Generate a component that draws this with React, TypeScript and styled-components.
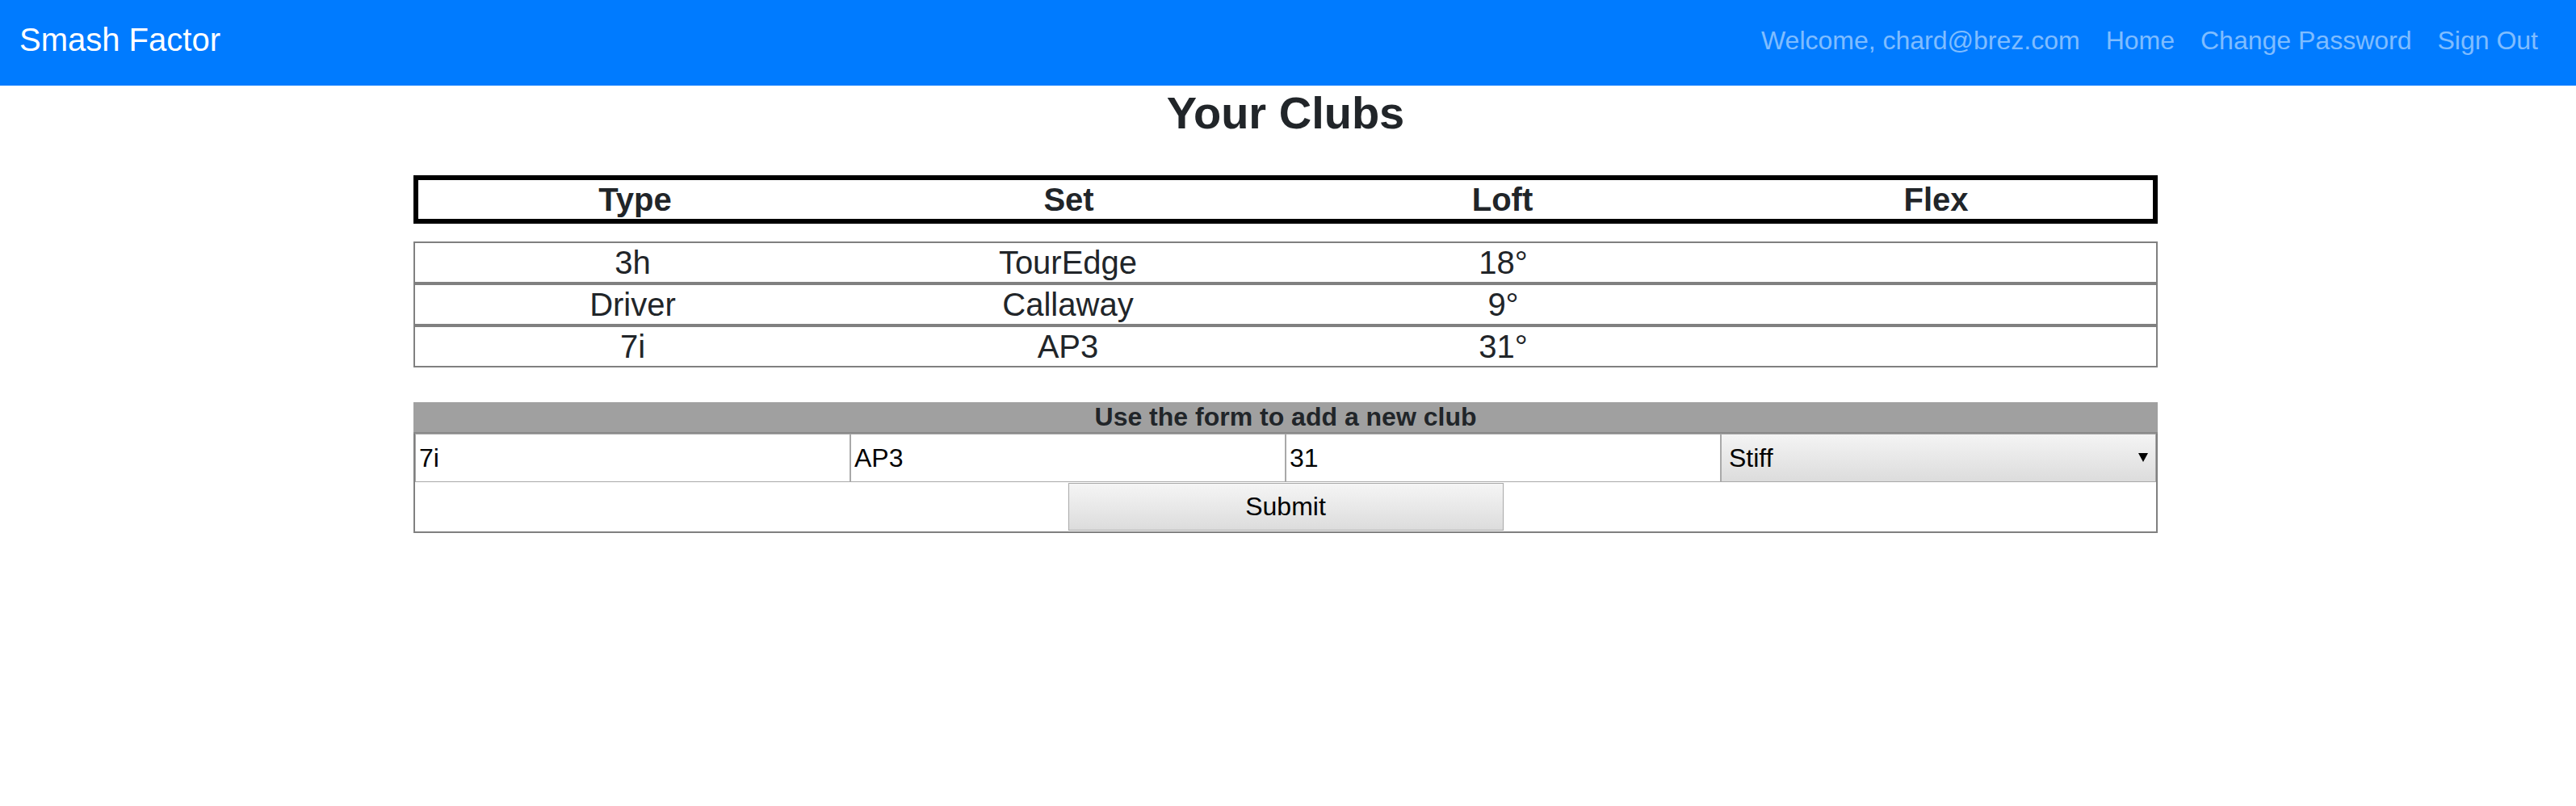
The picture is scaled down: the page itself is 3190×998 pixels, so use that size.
import React from "react";
import styled, { createGlobalStyle } from "styled-components";

const GlobalStyle = createGlobalStyle`
  * { box-sizing: border-box; }
  html, body {
    margin: 0;
    padding: 0;
    background: #ffffff;
  }
  body {
    font-family: "Liberation Sans", Arial, Helvetica, sans-serif;
    color: #212529;
  }
`;

const NavBar = styled.nav`
  display: flex;
  align-items: center;
  justify-content: space-between;
  height: 106px;
  padding: 0 31px 8px 24px;
  background: #007bff;
`;

const Brand = styled.a`
  font-size: 40px;
  line-height: 46px;
  color: #ffffff;
  text-decoration: none;
`;

const NavList = styled.ul`
  display: flex;
  align-items: center;
  list-style: none;
  margin: 0;
  padding: 2px 0 0;
`;

const NavItem = styled.li`
  padding: 0 16px;
  font-size: 32px;
  line-height: 37px;
  color: rgba(255, 255, 255, 0.5);
`;

const NavLink = styled.a`
  color: rgba(255, 255, 255, 0.5);
  text-decoration: none;
`;

const Main = styled.main`
  width: 2160px;
  margin-left: 512px;
`;

const Title = styled.h1`
  margin: 0 0 44px;
  text-align: center;
  font-size: 56px;
  font-weight: 700;
  line-height: 1.2;
  color: #212529;
`;

const HeaderRow = styled.div`
  display: grid;
  grid-template-columns: repeat(4, 1fr);
  border: 6px solid #000000;
  margin-bottom: 22px;
`;

const HeaderCell = styled.div`
  text-align: center;
  font-size: 40px;
  font-weight: 700;
  line-height: 48px;
  color: #212529;
`;

const ClubList = styled.div`
  display: flex;
  flex-direction: column;
  margin-bottom: 43px;
`;

const ClubRow = styled.div`
  display: grid;
  grid-template-columns: repeat(4, 1fr);
  border: 2px solid #808080;
`;

const ClubCell = styled.div`
  text-align: center;
  font-size: 40px;
  line-height: 48px;
  color: #212529;
  min-height: 48px;
`;

const AddForm = styled.form`
  display: flex;
  flex-direction: column;
`;

const FormTitle = styled.div`
  background: #a0a0a0;
  border-bottom: 2px solid #8a8a8a;
  text-align: center;
  font-size: 32px;
  font-weight: 700;
  line-height: 37px;
  color: #212529;
`;

const FormBody = styled.div`
  border: 2px solid #808080;
  border-top: none;
`;

const InputRow = styled.div`
  display: grid;
  grid-template-columns: repeat(4, 1fr);
`;

const TextInput = styled.input`
  width: 100%;
  height: 60px;
  margin: 0;
  padding: 0 4px;
  border: 1px solid #a9a9a9;
  border-radius: 0;
  background: #ffffff;
  font-family: "Liberation Sans", Arial, Helvetica, sans-serif;
  font-size: 32px;
  color: #000000;
  outline: none;
`;

const SelectWrap = styled.div`
  position: relative;
  height: 60px;
`;

const Select = styled.select`
  appearance: none;
  -webkit-appearance: none;
  width: 100%;
  height: 60px;
  margin: 0;
  padding: 0 30px 0 9px;
  border: 1px solid #a9a9a9;
  border-radius: 0;
  background: linear-gradient(#f4f4f4, #dcdcdc);
  font-family: "Liberation Sans", Arial, Helvetica, sans-serif;
  font-size: 32px;
  color: #000000;
  outline: none;
`;

const Arrow = styled.svg`
  position: absolute;
  right: 10px;
  top: 50%;
  width: 12px;
  height: 12px;
  margin-top: -7px;
  pointer-events: none;
`;

const SubmitRow = styled.div`
  display: flex;
  justify-content: center;
  padding: 1px 0;
`;

const SubmitButton = styled.button`
  width: 539px;
  height: 59px;
  margin: 0;
  padding: 0;
  border: 1px solid #a9a9a9;
  border-radius: 0;
  background: linear-gradient(#f5f5f5, #dcdcdc);
  font-family: "Liberation Sans", Arial, Helvetica, sans-serif;
  font-size: 32px;
  color: #000000;
  cursor: pointer;
`;

const clubs = [
  { type: "3h", set: "TourEdge", loft: "18°", flex: "" },
  { type: "Driver", set: "Callaway", loft: "9°", flex: "" },
  { type: "7i", set: "AP3", loft: "31°", flex: "" },
];

export default function App() {
  return (
    <>
      <GlobalStyle />
      <NavBar>
        <Brand href="#">Smash Factor</Brand>
        <NavList>
          <NavItem>Welcome, chard@brez.com</NavItem>
          <NavItem>
            <NavLink href="#">Home</NavLink>
          </NavItem>
          <NavItem>
            <NavLink href="#">Change Password</NavLink>
          </NavItem>
          <NavItem>
            <NavLink href="#">Sign Out</NavLink>
          </NavItem>
        </NavList>
      </NavBar>
      <Main>
        <Title>Your Clubs</Title>
        <HeaderRow>
          <HeaderCell>Type</HeaderCell>
          <HeaderCell>Set</HeaderCell>
          <HeaderCell>Loft</HeaderCell>
          <HeaderCell>Flex</HeaderCell>
        </HeaderRow>
        <ClubList>
          {clubs.map((c, i) => (
            <ClubRow key={i}>
              <ClubCell>{c.type}</ClubCell>
              <ClubCell>{c.set}</ClubCell>
              <ClubCell>{c.loft}</ClubCell>
              <ClubCell>{c.flex}</ClubCell>
            </ClubRow>
          ))}
        </ClubList>
        <AddForm onSubmit={(e) => e.preventDefault()}>
          <FormTitle>Use the form to add a new club</FormTitle>
          <FormBody>
            <InputRow>
              <TextInput defaultValue="7i" />
              <TextInput defaultValue="AP3" />
              <TextInput defaultValue="31" />
              <SelectWrap>
                <Select defaultValue="Stiff">
                  <option>Ladies</option>
                  <option>Senior</option>
                  <option>Regular</option>
                  <option>Stiff</option>
                  <option>Extra Stiff</option>
                </Select>
                <Arrow viewBox="0 0 12 12">
                  <polygon points="0,1 12,1 6,12" fill="#000" />
                </Arrow>
              </SelectWrap>
            </InputRow>
            <SubmitRow>
              <SubmitButton type="submit">Submit</SubmitButton>
            </SubmitRow>
          </FormBody>
        </AddForm>
      </Main>
    </>
  );
}
